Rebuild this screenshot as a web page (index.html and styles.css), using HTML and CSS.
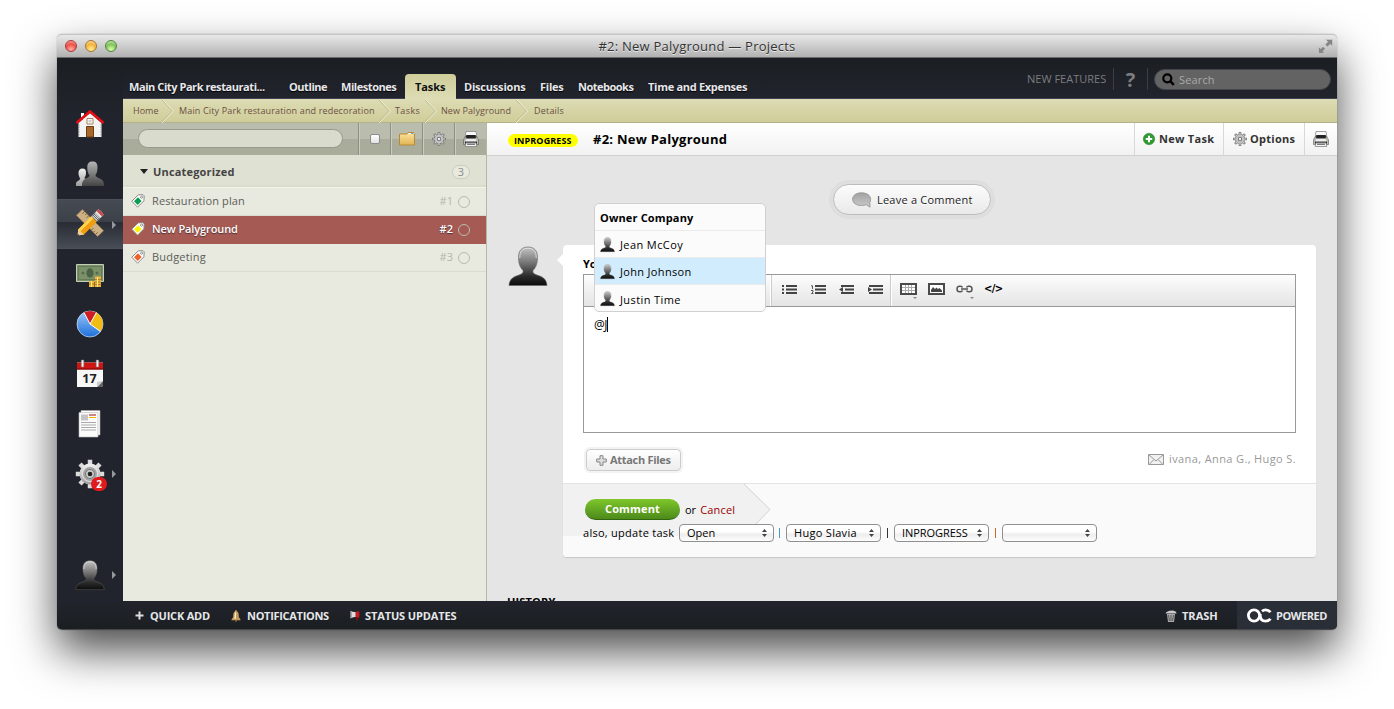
FILE: index.html
```html
<!DOCTYPE html>
<html lang="en">
<head>
<meta charset="utf-8">
<title>#2: New Palyground — Projects</title>
<link rel="stylesheet" href="styles.css">
</head>
<body>
<svg class="defs" width="0" height="0">
  <defs>
    <linearGradient id="g-person" x1="0" y1="0" x2="0" y2="1"><stop offset="0" stop-color="#c4c4c4"/><stop offset=".4" stop-color="#777"/><stop offset=".75" stop-color="#2c2c2c"/><stop offset="1" stop-color="#0c0c0c"/></linearGradient>
    <linearGradient id="g-light" x1="0" y1="0" x2="0" y2="1"><stop offset="0" stop-color="#b5b5b5"/><stop offset="1" stop-color="#444"/></linearGradient>
    <linearGradient id="g-metal" x1="0" y1="0" x2="0" y2="1"><stop offset="0" stop-color="#f2f2f2"/><stop offset="1" stop-color="#9b9b9b"/></linearGradient>
    <linearGradient id="g-folder" x1="0" y1="0" x2="0" y2="1"><stop offset="0" stop-color="#fbe5a0"/><stop offset="1" stop-color="#e2b453"/></linearGradient>
    <linearGradient id="g-blue" x1="0" y1="0" x2="0" y2="1"><stop offset="0" stop-color="#9cc8f8"/><stop offset="1" stop-color="#1d6fdc"/></linearGradient>
    <linearGradient id="g-bubble" x1="0" y1="0" x2="0" y2="1"><stop offset="0" stop-color="#a2a2a2"/><stop offset="1" stop-color="#cacaca"/></linearGradient>
    <symbol id="person" viewBox="0 0 40 40"><path d="M20 1c-6 0-9.500 3.500-9.500 10 0 7 1.500 10 4.500 13.500.6 2.500-1 3.500-4 4.500C5 31 1.500 33 1 39.500h38C38.500 33 35 31 29 29c-3-1-4.600-2-4-4.500C28 21 29.500 18 29.500 11 29.500 4.500 26 1 20 1z" fill="url(#g-person)" stroke="#666" stroke-width=".6"/><path d="M11.800 12C11.800 5 14.500 2.400 20 2.400S28.200 5 28.200 12" fill="none" stroke="#ddd" stroke-width="1"/></symbol>
    <symbol id="gear" viewBox="0 0 14 14"><g stroke="#777" stroke-width="2.600"><path d="M7 0v14M0 7h14M2.050 2.050l9.900 9.900M11.950 2.050l-9.900 9.900"/></g><circle cx="7" cy="7" r="5" fill="#777"/><g stroke="#cfcfcf" stroke-width="1.200"><path d="M7 .7v12.600M.7 7h12.600M2.600 2.600l8.800 8.800M11.400 2.600l-8.800 8.800"/></g><circle cx="7" cy="7" r="4.300" fill="#c4c4c4"/><circle cx="7" cy="7" r="2.200" fill="#777"/><circle cx="7" cy="7" r="1.200" fill="#eee"/></symbol>
    <symbol id="printer" viewBox="0 0 16 16"><path d="M3 .5h10l.7 4H2.300z" fill="#f8f8f8" stroke="#888" stroke-width=".8"/><path d="M3.500 4h9l1 3h-11z" fill="#222"/><path d="M2.500 5L.5 9v4.500h15V9l-2-4-1 2.500h-9z" fill="#bcbcbc" stroke="#555" stroke-width=".6"/><path d="M3 8.200h10v2H3z" fill="#f3f3f3"/><path d="M2 10.700h12v2H2z" fill="#1c1c1c"/><path d="M3 11.800h10l.8 3.700H2.200z" fill="#f4f4f4" stroke="#777" stroke-width=".7"/><path d="M4 13.200h8" stroke="#444"/><path d="M14 7.500h1v1h-1z" fill="#8be03c"/></symbol>
    <symbol id="tag" viewBox="0 0 14 14"><path d="M.8 7.200L7.200.9 12 .7l1.200 1.200-.3 4.900-6.300 6.400z" fill="#fff" stroke="#8b8b85" stroke-width="1"/><path d="M3 7.200l4-3.900 3.600 3.600L6.700 11z" fill="currentColor"/><circle cx="10.600" cy="3.200" r="1.100" fill="#fff" stroke="#777" stroke-width=".8"/></symbol>
    <symbol id="updown" viewBox="0 0 5 8"><path d="M2.500 0L5 3H0zM2.500 8L5 5H0z" fill="#444"/></symbol>
    <symbol id="sep" viewBox="0 0 12 24"><path d="M-.5 .5l11 11.500L-1 24" fill="none" stroke="#b5b489" stroke-width="1"/><path d="M.5 .5l11 11.500L0 24" fill="none" stroke="#efefd6" stroke-width="1"/></symbol>
  </defs>
</svg>
<div class="window">
  <div class="titlebar">
    <div class="lights"><i class="light red"></i><i class="light amber"></i><i class="light green"></i></div>
    <div class="title"><span class="t">#2: New Palyground — Projects</span></div>
    <svg class="expand" width="15" height="15" viewBox="0 0 15 15"><path d="M7.500.5h7v7l-2.300-2.300-2.700 2.700-2.400-2.400 2.700-2.700zM7 14.500H.5v-7l2.200 2.200 2.300-2.300L7.400 9.800 5 12.200z" fill="#858585" stroke="#d9d9d9" stroke-width=".5"/></svg>
  </div>
  <div class="app">
    <nav class="rail">
      <a class="rail-item"><svg width="30" height="30" viewBox="0 0 30 30"><path d="M6 4h3v6H6z" fill="#fff"/><path d="M3.500 14L15 4l11.500 10v14h-23z" fill="#f4f4f4"/><path d="M1.500 14L15 2.500 28.500 14" fill="none" stroke="#e80f12" stroke-width="2.600"/><path d="M12 9.500h6V15h-6z" fill="#fff" stroke="#a5835b"/><path d="M13.500 11h3v2.500h-3z" fill="#ccc"/><path d="M11.500 17.500h7V28h-7z" fill="#a5672a" stroke="#6d3f12"/><path d="M4.500 15v12M25.500 15v12" stroke="#ccc" stroke-dasharray="1.500 1"/></svg></a>
      <a class="rail-item"><svg width="30" height="30" viewBox="0 0 30 30"><path d="M7.500 9.500c2.500 0 3.500 1.500 3.500 4s-.5 4-1.500 5c0 2 3.500 1.500 4.500 4V27H1v-2.500c.5-3 4-2.500 4-5-1-2-1.500-3.500-1.500-5.500 0-3 1.500-4.500 4-4.500z" fill="url(#g-metal)"/><path d="M17.500 2.500c3.500 0 5 2 5 5.500s-.5 6-2 8c0 4 8 2 8.500 9v2H7c0-9 7-7 7.500-10.500C12.500 14 12.300 11 12.300 8c0-3.500 1.700-5.500 5.200-5.500z" fill="url(#g-light)"/></svg></a>
      <a class="rail-item active"><svg width="30" height="30" viewBox="0 0 30 30"><g transform="translate(0 -1) rotate(45 15 15)"><path d="M0 10.800h30v8.400H0z" fill="#cdb083" stroke="#9c7e52" stroke-width=".7"/><path d="M3 10.800v3M6 10.800v2M9 10.800v3M21 19.200v-3M24 19.200v-2M27 19.200v-3" stroke="#6e5530" stroke-width=".8"/></g><g transform="translate(0 -1) rotate(-45 15 15)"><path d="M2 11.200h19v7.600H2l-3.500-3.800z" fill="#f09d10"/><path d="M2 11.200h19v3H-.8z" fill="#fdd24e"/><path d="M2.500 11.200v7.600L-3 15z" fill="#eccf98"/><path d="M-1.300 14v2l-2-1z" fill="#222"/><path d="M21 11.200h5v7.600h-5z" fill="#d4d8dc" stroke="#555" stroke-width=".6"/><path d="M22.700 11.500v7M24.300 11.500v7" stroke="#333" stroke-width=".7"/><path d="M26 11.200h4.500q1.500 3.800 0 7.600H26z" fill="#e9e9e9"/><path d="M28 11.200h2.500q1.500 3.800 0 7.600H28z" fill="#c94b4b"/></g></svg><i class="caret"></i></a>
      <a class="rail-item"><svg width="30" height="30" viewBox="0 0 30 30"><path d="M1.500 5.500h27v17h-27z" fill="#7b916a" stroke="#c5cdb8"/><path d="M3.500 7.500h23v13h-23z" fill="none" stroke="#5b7050" stroke-width=".7"/><ellipse cx="15" cy="14" rx="3.600" ry="4.700" fill="#4d6245"/><circle cx="8" cy="14" r="1.500" fill="#566b4c"/><circle cx="22" cy="14" r="1.500" fill="#566b4c"/><path d="M20 17.500h6V28h-6zM14 22h5.500v6H14z" fill="#f0b435"/><path d="M20 20.500h6M20 23h6M20 25.500h6M14 25h5.500" stroke="#a87514" stroke-width=".8"/><path d="M22 18h1v10h-1zM16 22h1v6h-1z" fill="#fdea9a"/></svg></a>
      <a class="rail-item"><svg width="30" height="30" viewBox="0 0 30 30"><circle cx="15" cy="15" r="13" fill="url(#g-blue)" stroke="#d9e6f6" stroke-width=".7"/><path d="M15 15L9 3.500Q15 .5 21 3.500z" fill="#cf1d22"/><path d="M15 15L21.500 3.500Q31.500 11 25.500 22.500z" fill="#f2bc12"/><path d="M9 3.500L15 15l6.500-11.500M15 15l10.500 7.500" fill="none" stroke="#fff" stroke-width="1"/></svg></a>
      <a class="rail-item"><svg width="30" height="30" viewBox="0 0 30 30"><path d="M2 3.500h26V28H2z" fill="#f7f7f7"/><path d="M2 3.500h26v7H2z" fill="#cf1414"/><path d="M2 9.500h26v1H2z" fill="#7d0808"/><path d="M28 22l-6 6h6z" fill="#666"/><path d="M28 22l-6 6v-5z" fill="#ccc"/><g fill="#eee" stroke="#777" stroke-width=".5"><path d="M6.300 1h2.500v7H6.300zM21.200 1h2.500v7h-2.500z"/></g><text x="14.500" y="24" class="cal">17</text></svg></a>
      <a class="rail-item"><svg width="30" height="30" viewBox="0 0 30 30"><path d="M6 1.500h19V26H6z" fill="#fff" stroke="#aaa" stroke-width=".6"/><path d="M4 3.500h19V28H4z" fill="#fbfbfb" stroke="#bbb" stroke-width=".6"/><path d="M6 5.500h7v6H6z" fill="#c4c4c4"/><path d="M14 6h7" stroke="#a70d12"/><path d="M14 8.500h7" stroke="#f0b400"/><path d="M6 13.500h15M6 16h15M6 18.500h15M6 21h15" stroke="#aaa"/></svg></a>
      <a class="rail-item"><svg width="30" height="30" viewBox="0 0 30 30"><g stroke="#dcdcdc" stroke-width="4.500"><path d="M15 .8v28.400M.8 15h28.400M5 5l20 20M25 5L5 25"/></g><circle cx="15" cy="15" r="10.500" fill="url(#g-metal)"/><circle cx="15" cy="15" r="7.500" fill="#a3a3a3" stroke="#e8e8e8"/><circle cx="15" cy="15" r="4.500" fill="#c9c9c9" stroke="#777"/><circle cx="15" cy="15" r="2.300" fill="#222"/></svg><i class="caret"></i><b class="count">2</b></a>
      <a class="rail-item user"><svg width="30" height="32"><use href="#person"/></svg><i class="caret"></i></a>
    </nav>
    <div class="main">
      <header class="top">
        <div class="tabs">
          <a class="tab project"><span class="t">Main City Park restaurati...</span></a>
          <a class="tab outline"><span class="t">Outline</span></a>
          <a class="tab milestones"><span class="t">Milestones</span></a>
          <a class="tab current"><span class="t">Tasks</span></a>
          <a class="tab discussions"><span class="t">Discussions</span></a>
          <a class="tab files"><span class="t">Files</span></a>
          <a class="tab notebooks"><span class="t">Notebooks</span></a>
          <a class="tab time"><span class="t">Time and Expenses</span></a>
        </div>
        <div class="tools">
          <a class="features"><span class="t">NEW FEATURES</span></a>
          <a class="help">?</a>
          <div class="search"><svg width="13" height="13" viewBox="0 0 13 13"><circle cx="5.300" cy="5.300" r="4" fill="none" stroke="#000" stroke-width="2.200"/><path d="M8.200 8.200l3.600 3.600" stroke="#000" stroke-width="2.400"/></svg><span class="t">Search</span></div>
        </div>
      </header>
      <div class="crumbs">
        <span class="c-home"><span class="t">Home</span></span><svg width="12" height="24"><use href="#sep"/></svg>
        <span class="c-project"><span class="t">Main City Park restauration and redecoration</span></span><svg width="12" height="24"><use href="#sep"/></svg>
        <span class="c-tasks"><span class="t">Tasks</span></span><svg width="12" height="24"><use href="#sep"/></svg>
        <span class="c-task"><span class="t">New Palyground</span></span><svg width="12" height="24"><use href="#sep"/></svg>
        <span class="c-details"><span class="t">Details</span></span>
      </div>
      <div class="panes">
        <aside class="list">
          <div class="list-tools">
            <div class="filter"></div>
            <a class="tool"><i class="box"></i></a>
            <a class="tool"><svg width="16" height="14" viewBox="0 0 16 14"><path d="M.5 13V2h7.500l1-1.500h5.500V2h1v11z" fill="url(#g-folder)" stroke="#b98a35"/><path d="M9.500 1.500h5" stroke="#fff"/><path d="M12 1h2v1h-2z" fill="#4cb6e8"/></svg></a>
            <a class="tool"><svg width="14" height="14"><use href="#gear"/></svg></a>
            <a class="tool"><svg width="16" height="16"><use href="#printer"/></svg></a>
          </div>
          <div class="group"><i class="tri"></i><b class="t">Uncategorized</b><span class="total">3</span></div>
          <div class="task green-tag"><svg width="14" height="14"><use href="#tag"/></svg><span class="name t r1">Restauration plan</span><span class="num">#1</span><i class="ring"></i></div>
          <div class="task yellow-tag selected"><svg width="14" height="14"><use href="#tag"/></svg><span class="name t r2">New Palyground</span><span class="num">#2</span><i class="ring"></i></div>
          <div class="task orange-tag"><svg width="14" height="14"><use href="#tag"/></svg><span class="name t r3">Budgeting</span><span class="num">#3</span><i class="ring"></i></div>
        </aside>
        <section class="detail">
          <div class="detail-head">
            <span class="badge"><span class="t">INPROGRESS</span></span>
            <h1 class="t">#2: New Palyground</h1>
            <div class="actions">
              <a class="act new"><svg width="12" height="12" viewBox="0 0 12 12"><circle cx="6" cy="6" r="5.700" fill="#2f9b32" stroke="#227a26" stroke-width=".5"/><path d="M6 2.800v6.400M2.800 6h6.400" stroke="#fff" stroke-width="2"/></svg><b class="t">New Task</b></a>
              <a class="act options"><svg width="14" height="14"><use href="#gear"/></svg><b class="t">Options</b></a>
              <a class="act print"><svg width="16" height="16"><use href="#printer"/></svg></a>
            </div>
          </div>
          <div class="thread">
            <a class="leave"><svg width="19" height="16" viewBox="0 0 19 16"><path d="M9.500.8C4.300.8.600 3.400.600 7.200s3.700 6.300 8.900 6.300c1.800 0 3.300-.2 4.700-.8l3.900 2.500-.3-4.700c.5-1 .8-2 .8-3.300C18.600 3.400 14.700.8 9.500.8z" fill="url(#g-bubble)" stroke="#909090" stroke-width=".8"/></svg><span class="t">Leave a Comment</span></a>
            <div class="reply">
              <svg class="avatar" width="40" height="40"><use href="#person"/></svg>
              <div class="card">
                <div class="compose">
                  <b class="label">Yo</b>
                  <div class="editor">
                    <div class="bar">
                      <div class="bar-a"></div>
                      <div class="bar-b">
                        <svg width="15" height="9" viewBox="0 0 15 9"><path d="M0 1h2M0 4.500h2M0 8h2M4 1h11M4 4.500h11M4 8h11" stroke="#444" stroke-width="1.800"/></svg>
                        <svg width="15" height="9" viewBox="0 0 15 9"><path d="M4 1h11M4 4.500h11M4 8h11" stroke="#444" stroke-width="1.800"/><path d="M0 .8h1.500V4M0 5.500h2V7L.5 8.500h2" fill="none" stroke="#444" stroke-width=".9"/></svg>
                        <svg width="15" height="9" viewBox="0 0 15 9"><path d="M2 1h13M6 4.500h9M2 8h13" stroke="#444" stroke-width="1.800"/><path d="M4 2v5L0 4.500z" fill="#444"/></svg>
                        <svg width="15" height="9" viewBox="0 0 15 9"><path d="M1 1h14M5 4.500h10M1 8h14" stroke="#444" stroke-width="1.800"/><path d="M0 2v5l4-2.500z" fill="#444"/></svg>
                      </div>
                      <div class="bar-c">
                        <svg width="17" height="12" viewBox="0 0 17 12"><path d="M1 1h15v10H1z" fill="#fff" stroke="#4a4a4a" stroke-width="2"/><path d="M2 4.500h13M2 7.500h13M5.500 2v8M8.500 2v8M11.500 2v8" stroke="#aaa"/></svg>
                        <svg width="17" height="12" viewBox="0 0 17 12"><path d="M1 1h15v10H1z" fill="#fff" stroke="#4a4a4a" stroke-width="2"/><path d="M3 9V7l2-3 2 2 1.500-1.500L10 6l1.500-1L14 7.500V9z" fill="#444"/></svg>
                        <svg width="17" height="8" viewBox="0 0 17 8"><path d="M6.500 5.500Q6 6.800 4.500 6.800h-1Q1 6.800 1 4t2.500-2.800h1Q6 1.200 6.500 2.500M10.500 2.500Q11 1.200 12.500 1.200h1Q16 1.200 16 4t-2.500 2.800h-1Q11 6.800 10.500 5.500M5 4h7" fill="none" stroke="#555" stroke-width="1.500"/></svg>
                        <b class="code">&lt;/&gt;</b>
                        <i class="drop one"></i><i class="drop two"></i>
                      </div>
                    </div>
                    <div class="input"><span class="typed">@J</span><i class="cursor"></i></div>
                  </div>
                  <div class="under">
                    <a class="attach"><svg width="11" height="11" viewBox="0 0 11 11"><path d="M4 .7h3V4h3.300v3H7v3.300H4V7H.7V4H4z" fill="#ddd" stroke="#888"/></svg><b class="t">Attach Files</b></a>
                    <div class="notify"><svg width="16" height="11" viewBox="0 0 16 11"><path d="M.5.500h15v10H.5z" fill="#f1f1f1" stroke="#999"/><path d="M1 1l7 6 7-6M1 10.500l5-5M15 10.500l-5-5" fill="none" stroke="#999"/></svg><span class="t">ivana, Anna G., Hugo S.</span></div>
                  </div>
                </div>
                <div class="submit">
                  <svg class="arrow" width="208" height="52" viewBox="0 0 208 52"><path d="M0 0h181l26 25.500L181 52H0z" fill="#f1f1f1"/><path d="M181 0l26 25.500L181 52" fill="none" stroke="#d2d2d2"/></svg>
                  <div class="row-a"><a class="go"><b class="t">Comment</b></a><span class="or t">or</span><a class="cancel t">Cancel</a></div>
                  <div class="row-b">
                    <span class="also t">also, update task</span>
                    <span class="select"><span class="t s-open">Open</span><svg width="5" height="8"><use href="#updown"/></svg></span><i class="pipe p1"></i>
                    <span class="select"><span class="t s-hugo">Hugo Slavia</span><svg width="5" height="8"><use href="#updown"/></svg></span><i class="pipe p2"></i>
                    <span class="select"><span class="t s-prog">INPROGRESS</span><svg width="5" height="8"><use href="#updown"/></svg></span><i class="pipe p3"></i>
                    <span class="select"><span></span><svg width="5" height="8"><use href="#updown"/></svg></span>
                  </div>
                </div>
                <div class="mentions">
                  <div class="m-head"><b class="t">Owner Company</b></div>
                  <div class="m-row"><svg width="15" height="17"><use href="#person"/></svg><span class="t m1">Jean McCoy</span></div>
                  <div class="m-row on"><svg width="15" height="17"><use href="#person"/></svg><span class="t m2">John Johnson</span></div>
                  <div class="m-row"><svg width="15" height="17"><use href="#person"/></svg><span class="t m3">Justin Time</span></div>
                </div>
              </div>
            </div>
            <h2 class="history">HISTORY</h2>
          </div>
        </section>
      </div>
    </div>
  </div>
  <footer class="foot">
    <a class="f-add"><svg width="9" height="9" viewBox="0 0 9 9"><path d="M4.500.5v8M.5 4.500h8" stroke="#ddd" stroke-width="2"/></svg><b class="t">QUICK ADD</b></a>
    <a class="f-note"><svg width="10" height="12" viewBox="0 0 10 12"><path d="M5 .3Q6.300.3 6.200 1.600 8 2.500 7.800 7L9.500 9.500v.7h-9v-.7L2.200 7Q2 2.500 3.800 1.600 3.700.3 5 .3z" fill="#c59c5d"/><path d="M4.600 2.500L4 9" stroke="#fff0cf" stroke-width="1.300"/><circle cx="5" cy="10.800" r="1.100" fill="#8a6030"/></svg><b class="t">NOTIFICATIONS</b></a>
    <a class="f-status"><svg width="10" height="11" viewBox="0 0 10 11"><path d="M.5.800Q3 2.500 6 2v5Q3 6.500.5 8.500z" fill="#ddd"/><path d="M1 1.500v6.300" stroke="#777"/><path d="M5.500 2L9 1q1 3.500 0 7L5.500 7z" fill="#c21d23"/><path d="M6.500 7.500l.8 3" stroke="#a00" stroke-width="1.300"/></svg><b class="t">STATUS UPDATES</b></a>
    <a class="f-trash"><svg width="12" height="12" viewBox="0 0 12 12"><path d="M2 4h8l-1 8H3z" fill="#aaa"/><path d="M.5 3.500L1.500 2l3-1.200L8 .5l3 1.300.5 1.700z" fill="#ccc"/><path d="M3.500 5l1 6M8.500 5l-1 6M6 5v6" stroke="#444" stroke-width=".8"/></svg><b class="t">TRASH</b></a>
    <a class="f-power"><svg width="25" height="15" viewBox="0 0 25 15"><circle cx="7" cy="7.500" r="5.600" fill="none" stroke="#fff" stroke-width="2.800"/><path d="M23.500 4.200Q21.500 1.900 18.500 1.900q-2 0-3.500 1.400M13.200 6v1.500q.2 5.600 5.300 5.600 3 0 5-2.300" fill="none" stroke="#fff" stroke-width="2.800"/></svg><b class="t">POWERED</b></a>
  </footer>
</div>
</body>
</html>
```
FILE: styles.css
```css
* { box-sizing: border-box; }
body { margin: 0; padding: 34px 57px 0; height: 709px; overflow: hidden; background: #fff; font: 11px/14px "Open Sans", "Noto Sans", sans-serif; color: #000; }
.defs { position: absolute; }
svg { display: block; flex: none; overflow: visible; }
.t { display: block; white-space: nowrap; }
.window { width: 1280px; height: 596px; border-radius: 5px; display: flex; flex-direction: column; box-shadow: 0 0 1px rgba(0,0,0,.6), 0 21px 44px rgba(0,0,0,.7); }

.titlebar { height: 24px; flex: none; display: grid; grid-template-columns: 1fr auto 1fr; align-items: center; border-radius: 5px 5px 0 0; background: linear-gradient(#e8e8e8, #b1b1b1); border-bottom: 1px solid #6b6b6b; border-top: 1px solid #c4c4c4; }
.lights { display: flex; gap: 8px; padding-left: 8px; }
.light { width: 12px; height: 12px; border-radius: 50%; border: 1px solid; }
.red { background: radial-gradient(circle at 50% 85%, #ffb1a8, #ee5048 55%, #f9a29c 90%); border-color: #a6393a; }
.amber { background: radial-gradient(circle at 50% 85%, #fff39a, #f2b23d 55%, #fbdca0 90%); border-color: #a8742a; }
.green { background: radial-gradient(circle at 50% 85%, #dcffb0, #7fc258 55%, #c4e6ae 90%); border-color: #4c8635; }
.title { font-size: 13px; letter-spacing: .23px; color: #333; text-shadow: 0 1px 0 #e8e8e8; }
.expand { margin-right: 4px; justify-self: end; }

.app { display: flex; height: 543px; flex: none; }
.rail { width: 66px; flex: none; padding-top: 41px; background: linear-gradient(#1b1e22, #21242c 60px); }
.rail-item { height: 50px; display: flex; align-items: center; justify-content: center; position: relative; }
.rail-item.active { background: linear-gradient(#454a53, #3b4049 46%, #292c34 47%, #474c56); border-top: 1px solid #4b505b; border-bottom: 1px solid #4b505b; }
.rail-item.user { margin-top: 51px; }
.caret { position: absolute; left: 55px; top: 21px; border: 4px solid transparent; border-left: 4px solid #96989c; border-right: 0; }
.count { position: absolute; left: 34px; top: 28px; width: 16px; height: 14px; border-radius: 7px; background: #e01a1d; color: #fff; font-size: 10px; line-height: 14px; text-align: center; }
.cal { font: bold 12.5px "Open Sans"; fill: #222; text-anchor: middle; }

.main { flex: 1; min-width: 0; display: flex; flex-direction: column; }
.top { height: 41px; flex: none; background: linear-gradient(#1b1e22, #21242c); border-bottom: 1px solid #3e4252; display: flex; justify-content: space-between; }
.tabs { display: flex; align-items: flex-end; padding-left: 6px; }
.tab { height: 24px; line-height: 25px; font-weight: bold; color: #e8e8ec; text-shadow: 0 1px 1px #000; }
.project { width: 160px; letter-spacing: -.43px; }
.outline { width: 52px; letter-spacing: -.43px; }
.milestones { width: 64px; letter-spacing: -.45px; }
.current { width: 51px; padding-left: 10px; margin-right: 8px; margin-bottom: -1px; height: 25px; border-radius: 4px 4px 0 0; background: linear-gradient(#cfcd9a, #dddcb4); color: #111; text-shadow: none; letter-spacing: -.1px; }
.discussions { width: 76px; letter-spacing: -.2px; }
.files { width: 38px; letter-spacing: -.25px; }
.notebooks { width: 70px; letter-spacing: -.5px; }
.time { letter-spacing: -.3px; }
.tools { display: flex; align-items: flex-start; padding-right: 6px; }
.features { height: 22px; margin-top: 10px; width: 87px; border-right: 1px solid #3b3e45; color: #7c7d80; line-height: 22px; }
.help { height: 22px; margin-top: 10px; width: 34px; border-right: 1px solid #3b3e45; margin-right: 6px; text-align: center; color: #7c7d80; font: bold 20px/23px "Open Sans"; }
.search { width: 177px; height: 21px; margin-top: 11px; border-radius: 11px; background: #636363; border: 1px solid #42454c; color: #a9a9a9; display: flex; align-items: center; gap: 4px; padding-left: 7px; letter-spacing: .15px; }

.crumbs { height: 24px; flex: none; display: flex; line-height: 24px; font-size: 9px; color: #6b4f42; padding-left: 10px; background: linear-gradient(#dddcb4, #cfcd99); border-bottom: 1px solid #b3b28a; }
.c-home { width: 29px; }
.c-project { width: 205px; padding-left: 5px; letter-spacing: .15px; }
.c-tasks { width: 34px; padding-left: 4px; letter-spacing: .4px; }
.c-task { width: 79px; padding-left: 4px; letter-spacing: .08px; }
.c-details { padding-left: 6px; letter-spacing: .2px; }

.panes { flex: 1; min-height: 0; display: flex; }
.list { width: 364px; flex: none; background: #e8e9df; border-right: 1px solid #b4b8a3; }
.list-tools { height: 32px; display: flex; align-items: center; background: linear-gradient(#babdae 50%, #a9ac9b 50%); }
.filter { width: 205px; height: 19px; margin: 0 15px 1px; border-radius: 10px; border: 1px solid #979a89; background: #d9dbcd; }
.tool { width: 32px; height: 32px; border-left: 1px solid #8e9181; box-shadow: inset 1px 0 #c9cbbd; display: flex; align-items: center; justify-content: center; }
.box { width: 10px; height: 10px; border: 1px solid #8c8c8c; border-radius: 2px; background: linear-gradient(#fff, #e3e3e3); }
.group { height: 33px; display: flex; align-items: center; padding: 1px 16px 0 17px; background: #dfe1d2; border-bottom: 1px solid #f1f2ea; box-shadow: inset 0 -2px #dadccc; color: #444; letter-spacing: .17px; }
.tri { border: 4px solid transparent; border-top: 5px solid #222; border-bottom: 0; margin-right: 5px; }
.total { margin-left: auto; width: 18px; height: 14px; border-radius: 7px; background: #e8e9df; border: 1px solid #c9cbbc; color: #8d8f85; text-align: center; line-height: 12px; }
.task { height: 28px; display: flex; align-items: center; padding: 0 16px 1px 8px; border-bottom: 1px solid #dadccd; color: #5d5e58; }
.name { margin-left: 7px; margin-top: -1px; flex: 1; }
.r1 { letter-spacing: .12px; }
.r2 { letter-spacing: -.1px; }
.r3 { letter-spacing: .2px; }
.num { color: #b5b7aa; margin-right: 5px; }
.ring { width: 12px; height: 12px; border: 1px solid #b9bbae; border-radius: 50%; margin-top: 2px; }
.green-tag svg { color: #0a9c50; }
.yellow-tag svg { color: #fbf200; }
.orange-tag svg { color: #f0602a; }
.selected { background: #a55a54; border-color: #a55a54; color: #fff; text-shadow: 0 1px 1px #503030; font-weight: 600; }
.selected .num { color: #fff; }

.detail { flex: 1; min-width: 0; background: #e5e5e5; display: flex; flex-direction: column; overflow: hidden; }
.detail-head { height: 33px; flex: none; display: flex; align-items: center; padding-left: 21px; background: linear-gradient(#fff, #f2f2f2); border-bottom: 1px solid #d0d0d0; }
.badge { width: 70px; height: 13px; border-radius: 7px; background: #ff0; font-size: 9px; font-weight: bold; padding-left: 6px; margin-top: 3px; line-height: 13px; letter-spacing: .12px; }
h1 { margin: 0 0 0 15px; font-size: 13px; letter-spacing: .25px; }
.actions { display: flex; margin-left: auto; }
.act { height: 32px; border-left: 1px solid #d8d8d8; display: flex; align-items: center; gap: 4px; color: #333; padding-left: 8px; letter-spacing: .28px; }
.new { width: 89px; }
.options { width: 81px; padding-left: 9px; gap: 3px; }
.print { width: 33px; }
.thread { display: flex; flex-direction: column; align-items: flex-start; }
.leave { width: 158px; height: 31px; margin: 28px 0 30px 346px; border-radius: 16px; border: 1px solid #bcbcbc; background: linear-gradient(#fcfcfc, #e9e9e9); box-shadow: 0 0 0 4px #dedede; display: flex; align-items: center; padding-left: 18px; gap: 6px; color: #222; text-shadow: 0 1px #fff; letter-spacing: .22px; }
.reply { display: flex; padding-left: 21px; }
.avatar { margin: 1px 15px 0 0; }
.card { width: 753px; height: 312px; position: relative; border-radius: 4px; background: #fff; box-shadow: 0 1px 1px #c6c6c6; display: flex; flex-direction: column; }
.card::before { content: ""; position: absolute; left: -6px; top: 9px; border: 6px solid transparent; border-right-color: #fff; border-left: 0; }
.compose { height: 239px; flex: none; padding: 12px 20px 0; border-bottom: 1px solid #e3e3e3; }
.label { display: block; height: 17px; width: 12px; overflow: hidden; }
.editor { height: 159px; border: 1px solid #999; display: flex; flex-direction: column; }
.bar { height: 32px; flex: none; display: flex; background: linear-gradient(#fdfdfd, #e4e4e4); border-bottom: 1px solid #999; }
.bar-a { width: 187px; border-right: 1px solid #fff; }
.bar-b { width: 120px; display: flex; gap: 13.500px; align-items: center; padding-left: 10px; border-left: 1px solid #ccc; border-right: 1px solid #ccc; padding-bottom: 3px; }
.bar-c { display: flex; gap: 11px; align-items: center; padding-left: 8px; border-left: 1px solid #fff; position: relative; padding-bottom: 3px; }
.code { font: bold 10px/12px "DejaVu Sans"; letter-spacing: -.6px; }
.drop { position: absolute; top: 22px; border: 2px solid transparent; border-top: 2px solid #888; border-bottom: 0; }
.one { left: 21px; }
.two { left: 78px; }
.input { display: flex; padding: 10px 0 0 10px; font-size: 12px; line-height: 16px; }
.typed { letter-spacing: -.5px; }
.cursor { width: 1px; height: 15px; background: #000; }
.under { display: flex; justify-content: space-between; padding: 16px 0 0 3px; }
.attach { width: 95px; height: 22px; border: 1px solid #ccc; border-radius: 4px; background: linear-gradient(#fff, #ededed); box-shadow: 0 0 0 2px #f3f3f3; display: flex; align-items: center; gap: 3px; padding-left: 9px; color: #777; letter-spacing: -.3px; }
.notify { display: flex; align-items: center; gap: 5px; color: #999; height: 20px; letter-spacing: .38px; }
.submit { flex: 1; position: relative; background: #fafafa; border-radius: 0 0 4px 4px; padding: 15px 0 0 20px; }
.arrow { position: absolute; left: 0; top: 0; }
.row-a, .row-b { position: relative; display: flex; align-items: center; }
.row-a { padding-left: 2px; height: 21px; }
.go { width: 95px; height: 21px; border-radius: 11px; background: linear-gradient(#7ec72a, #4c8a1b); border-bottom: 1px solid #33640f; color: #fff; display: flex; align-items: center; justify-content: center; margin-right: 5px; letter-spacing: .15px; }
.or { margin-right: 4px; }
.cancel { color: #900; letter-spacing: .2px; }
.row-b { margin-top: 4px; height: 18px; }
.also { width: 96px; letter-spacing: .27px; }
.select { width: 95px; height: 18px; border: 1px solid #909090; border-radius: 4px; background: linear-gradient(#fff 40%, #eee 60%, #fdfdfd); display: flex; justify-content: space-between; align-items: center; padding: 0 6px 0 7px; }
.s-hugo { letter-spacing: .3px; }
.s-prog { letter-spacing: -.05px; }
.pipe { width: 1px; height: 10px; margin: 0 6px; }
.p1 { background: #4a9cc9; margin-left: 5px; }
.p2 { background: #333; }
.p3 { background: #cb6b25; }
.mentions { position: absolute; left: 31px; top: -42px; width: 172px; height: 109px; background: #fbfbfb; border: 1px solid #d0d0d0; border-radius: 5px; }
.m-head, .m-row { height: 27px; display: flex; align-items: center; padding: 2px 0 0 5px; border-bottom: 1px solid #ebebeb; letter-spacing: .15px; }
.m-row:last-child { border: 0; }
.m-row svg { margin-top: -2px; }
.m-row .t { margin-left: 5px; }
.m1, .m3 { letter-spacing: .4px; }
.m2 { letter-spacing: .33px; }
.on { background: #d0ecfd; }
.history { margin: 39px 0 0 20px; font-size: 11px; line-height: 12px; letter-spacing: .15px; }

.foot { height: 29px; flex: none; display: flex; align-items: center; background: linear-gradient(#21242c, #1b1e21); border-radius: 0 0 5px 5px; color: #e6e7ea; padding-left: 78px; border-bottom: 1px solid #45474b; }
.foot a { display: flex; align-items: center; gap: 6px; padding-top: 2px; }
.foot svg { margin-top: -1px; }
.foot .f-add { width: 96px; letter-spacing: -.2px; }
.foot .f-note { width: 119px; letter-spacing: -.3px; }
.foot .f-status { letter-spacing: -.12px; gap: 5px; }
.foot .f-trash { margin-left: auto; gap: 5px; width: 72px; }
.foot .f-power { width: 100px; height: 28px; background: #2a2e37; border-radius: 0 0 5px 0; padding-left: 10px; gap: 4px; letter-spacing: -.42px; }
```
